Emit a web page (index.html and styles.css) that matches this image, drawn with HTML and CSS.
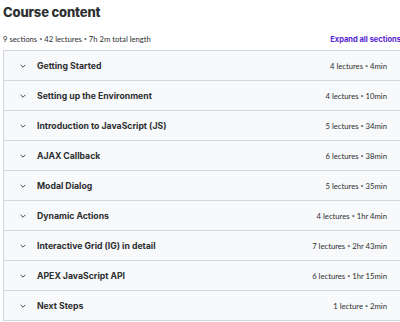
FILE: index.html
```html
<!DOCTYPE html>
<html lang="en">
<head>
<meta charset="utf-8">
<title>Course content</title>
<link rel="stylesheet" href="styles.css">
</head>
<body>
<section class="curriculum">
  <h2 class="curriculum-title">Course content</h2>
  <div class="curriculum-meta">
    <span class="meta-text">9 sections <span class="dot">•</span> 42 lectures <span class="dot">•</span> 7h 2m total length</span>
    <button class="expand-all">Expand all sections</button>
  </div>
  <ul class="sections">
    <li class="section"><span class="chevron"><svg viewBox="0 0 10 6" width="6" height="4"><path d="M1 1l4 4 4-4" fill="none" stroke="currentColor" stroke-width="1.6"/></svg></span><span class="section-title">Getting Started</span><span class="section-info">4 lectures <span class="dot">•</span> 4min</span></li>
    <li class="section"><span class="chevron"><svg viewBox="0 0 10 6" width="6" height="4"><path d="M1 1l4 4 4-4" fill="none" stroke="currentColor" stroke-width="1.6"/></svg></span><span class="section-title">Setting up the Environment</span><span class="section-info">4 lectures <span class="dot">•</span> 10min</span></li>
    <li class="section"><span class="chevron"><svg viewBox="0 0 10 6" width="6" height="4"><path d="M1 1l4 4 4-4" fill="none" stroke="currentColor" stroke-width="1.6"/></svg></span><span class="section-title">Introduction to JavaScript (JS)</span><span class="section-info">5 lectures <span class="dot">•</span> 34min</span></li>
    <li class="section"><span class="chevron"><svg viewBox="0 0 10 6" width="6" height="4"><path d="M1 1l4 4 4-4" fill="none" stroke="currentColor" stroke-width="1.6"/></svg></span><span class="section-title">AJAX Callback</span><span class="section-info">6 lectures <span class="dot">•</span> 38min</span></li>
    <li class="section"><span class="chevron"><svg viewBox="0 0 10 6" width="6" height="4"><path d="M1 1l4 4 4-4" fill="none" stroke="currentColor" stroke-width="1.6"/></svg></span><span class="section-title">Modal Dialog</span><span class="section-info">5 lectures <span class="dot">•</span> 35min</span></li>
    <li class="section"><span class="chevron"><svg viewBox="0 0 10 6" width="6" height="4"><path d="M1 1l4 4 4-4" fill="none" stroke="currentColor" stroke-width="1.6"/></svg></span><span class="section-title">Dynamic Actions</span><span class="section-info">4 lectures <span class="dot">•</span> 1hr 4min</span></li>
    <li class="section"><span class="chevron"><svg viewBox="0 0 10 6" width="6" height="4"><path d="M1 1l4 4 4-4" fill="none" stroke="currentColor" stroke-width="1.6"/></svg></span><span class="section-title">Interactive Grid (IG) in detail</span><span class="section-info">7 lectures <span class="dot">•</span> 2hr 43min</span></li>
    <li class="section"><span class="chevron"><svg viewBox="0 0 10 6" width="6" height="4"><path d="M1 1l4 4 4-4" fill="none" stroke="currentColor" stroke-width="1.6"/></svg></span><span class="section-title">APEX JavaScript API</span><span class="section-info">6 lectures <span class="dot">•</span> 1hr 15min</span></li>
    <li class="section"><span class="chevron"><svg viewBox="0 0 10 6" width="6" height="4"><path d="M1 1l4 4 4-4" fill="none" stroke="currentColor" stroke-width="1.6"/></svg></span><span class="section-title">Next Steps</span><span class="section-info">1 lecture <span class="dot">•</span> 2min</span></li>
  </ul>
</section>
</body>
</html>
```
FILE: styles.css
```css
html, body {
  margin: 0;
  padding: 0;
  background: #ffffff;
}

body {
  font-family: "Lato", "Liberation Sans", sans-serif;
  color: #2d2f31;
  overflow: hidden;
}

.curriculum {
  padding: 2px 0 0 3px;
  width: 398px;
}

.curriculum-title {
  margin: 0;
  font-family: "Inter", "Liberation Sans", sans-serif;
  font-size: 13px;
  font-weight: 800;
  line-height: 20px;
  letter-spacing: -0.15px;
}

.curriculum-meta {
  display: flex;
  justify-content: space-between;
  align-items: center;
  margin-top: 12px;
  height: 10px;
  margin-bottom: 6px;
  font-size: 7.7px;
}

.meta-text {
  color: #2d2f31;
}

.dot {
  font-size: 0.7em;
  vertical-align: 0.1em;
  color: #6a6f73;
}

.expand-all {
  border: 0;
  padding: 0;
  background: none;
  font-family: "Inter", "Liberation Sans", sans-serif;
  font-size: 7.5px;
  font-weight: 700;
  color: #5624d0;
}

.sections {
  list-style: none;
  margin: 0;
  padding: 0;
  border: 1px solid #d1d7dc;
  border-right: 0;
}

.section {
  display: flex;
  align-items: center;
  height: 29px;
  padding: 0 14px 0 16px;
  background: #f7f9fa;
  border-top: 1px solid #d1d7dc;
}

.section:first-child {
  border-top: 0;
}

.chevron {
  display: flex;
  width: 17px;
  color: #3e4143;
}

.section-title {
  flex: 1;
  font-family: "Inter", "Liberation Sans", sans-serif;
  font-size: 8.7px;
  font-weight: 700;
}

.section-info {
  font-size: 7.7px;
  color: #2d2f31;
}
```
